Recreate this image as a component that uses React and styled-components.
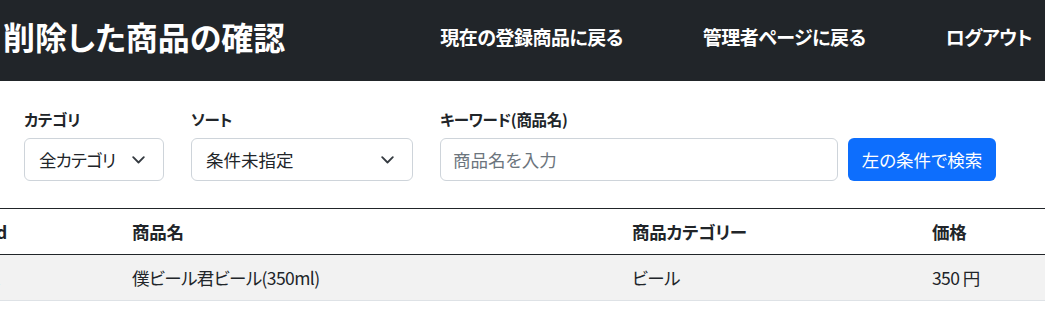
import React from "react";
import styled, { createGlobalStyle } from "styled-components";

const GlobalStyle = createGlobalStyle`
  html, body {
    margin: 0;
    padding: 0;
    width: 1045px;
    overflow: hidden;
    background: #ffffff;
  }
  body {
    font-family: "Noto Sans CJK JP", "Noto Sans", sans-serif;
    font-feature-settings: "palt";
    color: #212529;
    font-size: 17.5px;
  }
  * { box-sizing: border-box; }
`;

const Page = styled.div`
  width: 1045px;
  overflow: hidden;
`;

const NavBar = styled.header`
  height: 81px;
  background: #212529;
  display: flex;
  align-items: center;
  justify-content: space-between;
  padding: 0 13px 9px 3px;
  color: #ffffff;
`;

const Title = styled.h1`
  margin: 0;
  font-size: 32px;
  font-weight: 700;
  line-height: 1.2;
  white-space: nowrap;
`;

const NavLinks = styled.nav`
  display: flex;
  align-items: center;
  gap: 80px;
`;

const NavLink = styled.a`
  color: #ffffff;
  text-decoration: none;
  font-size: 19px;
  font-weight: 700;
  letter-spacing: -0.5px;
  white-space: nowrap;
`;

const FilterBar = styled.form`
  display: flex;
  align-items: flex-end;
  gap: 27px;
  padding: 26px 0 0 24px;
`;

const Field = styled.div`
  display: flex;
  flex-direction: column;
  gap: 7px;
`;

const Label = styled.label`
  font-size: 15.5px;
  font-weight: 700;
  line-height: 24px;
  letter-spacing: -0.3px;
  color: #212529;
`;

const SelectBox = styled.div`
  width: ${(p) => p.$width}px;
  height: 43px;
  border: 1px solid #ced4da;
  border-radius: 6px;
  display: flex;
  align-items: center;
  justify-content: space-between;
  padding: 0 18px 0 14px;
  font-size: 17.5px;
  color: #212529;
  background: #fff;
`;

const SelectText = styled.span`
  letter-spacing: ${(p) => (p.$tight ? "-0.8px" : "0")};
`;

const Chevron = () => (
  <svg width="13" height="8" viewBox="0 0 13 8" fill="none">
    <path d="M1.2 1.2 L6.5 6.5 L11.8 1.2" stroke="#343a40" strokeWidth="1.8" strokeLinecap="round" strokeLinejoin="round" />
  </svg>
);

const SearchRow = styled.div`
  display: flex;
  gap: 10px;
`;

const TextInput = styled.input`
  width: 398px;
  height: 43px;
  border: 1px solid #ced4da;
  border-radius: 6px;
  padding: 0 12px;
  font-family: inherit;
  font-feature-settings: "palt";
  font-size: 17.5px;
  color: #212529;
  outline: none;
  &::placeholder {
    color: #6c757d;
  }
`;

const SearchButton = styled.button`
  width: 148px;
  height: 43px;
  border: none;
  border-radius: 6px;
  background: #0d6efd;
  color: #ffffff;
  font-family: inherit;
  font-feature-settings: "palt";
  font-size: 17.5px;
  padding: 0;
  cursor: pointer;
`;

const Table = styled.table`
  margin: 27px 0 0 -17px;
  border-collapse: collapse;
  border-top: 1px solid #212529;
  table-layout: fixed;
  width: 1300px;
`;

const Col = styled.col`
  width: ${(p) => p.$width}px;
`;

const Th = styled.th`
  text-align: left;
  font-weight: 700;
  font-size: 17.5px;
  line-height: 27px;
  padding: 9px 8px;
  border-bottom: 1px solid #212529;
  white-space: nowrap;
  letter-spacing: -0.3px;
`;

const Tr = styled.tr`
  background: ${(p) => (p.$striped ? "#f2f2f2" : "#ffffff")};
`;

const Td = styled.td`
  font-size: 17.5px;
  line-height: 27px;
  padding: 9px 8px;
  border-bottom: 1px solid #dee2e6;
  white-space: nowrap;
  letter-spacing: -0.6px;
`;

const rows = [
  { id: 1, name: "僕ビール君ビール(350ml)", category: "ビール", price: "350 円" },
  { id: 2, name: "ほろよい白いサワー(350ml)", category: "チューハイ", price: "150 円" },
];

export default function App() {
  return (
    <Page>
      <GlobalStyle />
      <NavBar>
        <Title>削除した商品の確認</Title>
        <NavLinks>
          <NavLink href="#">現在の登録商品に戻る</NavLink>
          <NavLink href="#">管理者ページに戻る</NavLink>
          <NavLink href="#">ログアウト</NavLink>
        </NavLinks>
      </NavBar>

      <FilterBar onSubmit={(e) => e.preventDefault()}>
        <Field>
          <Label>カテゴリ</Label>
          <SelectBox $width={140}>
            <SelectText $tight>全カテゴリ</SelectText>
            <Chevron />
          </SelectBox>
        </Field>
        <Field>
          <Label>ソート</Label>
          <SelectBox $width={222}>
            <SelectText>条件未指定</SelectText>
            <Chevron />
          </SelectBox>
        </Field>
        <Field>
          <Label>キーワード(商品名)</Label>
          <SearchRow>
            <TextInput placeholder="商品名を入力" />
            <SearchButton type="submit">左の条件で検索</SearchButton>
          </SearchRow>
        </Field>
      </FilterBar>

      <Table>
        <colgroup>
          <Col $width={141} />
          <Col $width={500} />
          <Col $width={300} />
          <Col $width={200} />
          <Col $width={159} />
        </colgroup>
        <thead>
          <tr>
            <Th>id</Th>
            <Th>商品名</Th>
            <Th>商品カテゴリー</Th>
            <Th>価格</Th>
            <Th>削除日</Th>
          </tr>
        </thead>
        <tbody>
          {rows.map((r, i) => (
            <Tr key={r.id} $striped={i % 2 === 0}>
              <Td>{r.id}</Td>
              <Td>{r.name}</Td>
              <Td>{r.category}</Td>
              <Td>{r.price}</Td>
              <Td>2023-01-01</Td>
            </Tr>
          ))}
        </tbody>
      </Table>
    </Page>
  );
}
